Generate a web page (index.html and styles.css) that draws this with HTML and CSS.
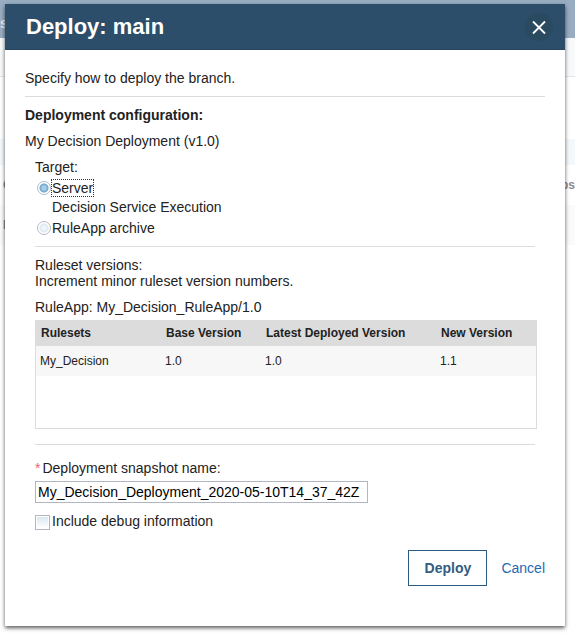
FILE: index.html
```
<!DOCTYPE html>
<html lang="en">
<head>
<meta charset="utf-8">
<title>Deploy: main</title>
<link rel="stylesheet" href="styles.css">
</head>
<body>
<div class="page" aria-hidden="true">
  <div class="page-bar">s</div>
  <div class="page-tabs"></div>
  <div class="page-gap"></div>
  <div class="page-tools"></div>
  <div class="page-row page-head"><span>C</span><span>ps</span></div>
  <div class="page-row page-item"><span>I</span></div>
</div>
<form class="dialog" role="dialog" aria-labelledby="title">
  <header class="dialog-head">
    <h1 id="title">Deploy: main</h1>
    <button class="close" type="button" aria-label="Close">
      <svg width="28" height="28" viewBox="0 0 28 28"><path d="M8 8.5l12 12M20 8.5l-12 12" fill="none" stroke="#fff" stroke-width="1.8"/></svg>
    </button>
  </header>
  <div class="dialog-body">
    <p class="intro">Specify how to deploy the branch.</p>
    <h2>Deployment configuration:</h2>
    <p class="config">My Decision Deployment (v1.0)</p>
    <div class="details">
      <div class="section targets" role="radiogroup" aria-labelledby="target">
        <p id="target">Target:</p>
        <div class="option"><input class="radio" type="radio" name="target" id="server" checked><label class="focused" for="server">Server</label></div>
        <p class="service">Decision Service Execution</p>
        <div class="option"><input class="radio" type="radio" name="target" id="archive"><label for="archive">RuleApp archive</label></div>
      </div>
      <div class="section rulesets">
        <p>Ruleset versions:</p>
        <p>Increment minor ruleset version numbers.</p>
        <p class="ruleapp">RuleApp: My_Decision_RuleApp/1.0</p>
        <div class="grid">
          <table>
            <colgroup><col class="c-name"><col class="c-base"><col class="c-latest"><col></colgroup>
            <thead><tr><th scope="col">Rulesets</th><th scope="col">Base Version</th><th scope="col">Latest Deployed Version</th><th scope="col">New Version</th></tr></thead>
            <tbody><tr><td>My_Decision</td><td>1.0</td><td>1.0</td><td>1.1</td></tr></tbody>
          </table>
        </div>
      </div>
      <div class="snapshot">
        <label class="field-label" for="snapshot"><span class="required">*</span>Deployment snapshot name:</label>
        <input class="text" type="text" id="snapshot" value="My_Decision_Deployment_2020-05-10T14_37_42Z">
        <div class="debug"><input class="check" type="checkbox" id="debug"><label for="debug">Include debug information</label></div>
      </div>
    </div>
    <footer class="actions">
      <button class="deploy" type="submit">Deploy</button>
      <a class="cancel" href="#">Cancel</a>
    </footer>
  </div>
</form>
</body>
</html>
```
FILE: styles.css
```
* { box-sizing: border-box; }

body {
  margin: 0;
  background: #fff;
  color: #222;
  font: 14px/16px "Liberation Sans", Arial, sans-serif;
}

h1, h2, p { margin: 0; font-size: 14px; }

/* Page behind the dialog */
.page-bar {
  height: 38px;
  padding-top: 15px;
  background: #99adc2;
  color: #e6ecf2;
  font-weight: bold;
}
.page-tabs { height: 39px; background: #f7f9fb; border-bottom: 1px solid #e2e8ea; }
.page-gap { height: 62px; }
.page-tools { height: 26px; background: #f3f8fb; }
.page-row {
  display: flex;
  justify-content: space-between;
  align-items: center;
  height: 40px;
  padding-left: 3px;
  color: #8d8b90;
  font-size: 12px;
  font-weight: bold;
}
.page-item { background: #fafafa; }

/* Dialog */
.dialog {
  position: absolute;
  top: 4px;
  left: 5px;
  right: 10px;
  background: #fff;
  box-shadow: 0 2px 4px rgba(0, 0, 0, 0.65);
}
.dialog-head {
  display: flex;
  align-items: center;
  justify-content: space-between;
  height: 46px;
  padding: 0 12px 0 21px;
  background: #2d4e6b;
  border-bottom: 1px solid #274562;
}
.dialog-head h1 { color: #fff; font-size: 22px; line-height: 26px; }
.close {
  width: 28px;
  height: 28px;
  padding: 0;
  border: 0;
  border-radius: 50%;
  background: #294a5f;
}
.close svg { display: block; }

.dialog-body { padding: 20px 20px 40px; }
.intro { padding-bottom: 10px; margin-bottom: 10px; border-bottom: 1px solid #dcdcdc; }
.config { margin: 10px 0; }
.details { padding: 0 10px; }
.section { border-bottom: 1px solid #dcdcdc; }

.targets { padding-bottom: 10px; margin-bottom: 10px; }
.option { display: flex; align-items: center; gap: 1px; padding-left: 2px; margin-top: 5px; }
.option label { margin: -1px; border: 1px solid transparent; }
.option .focused { border: 1px dotted #333; }
.service { margin-top: 3px; padding-left: 17px; }
.radio {
  appearance: none;
  width: 14px;
  height: 14px;
  margin: 0;
  border: 1px solid #b4bac7;
  border-radius: 50%;
  background: radial-gradient(circle, #edf4fa 0 2px, #dce8f2 4px, #fff 5px);
}
.radio:checked { background: radial-gradient(circle, #a5cce8 0 2px, #6ea3c9 4px, #fff 5px); }

.rulesets { padding-bottom: 15px; margin-bottom: 15px; }
.ruleapp { margin: 10px 0 5px; }
.grid { margin-right: -2px; min-height: 109px; border: 1px solid #dcdcdc; border-top: 0; }
table { width: 100%; border-collapse: collapse; table-layout: fixed; font-size: 12px; text-align: left; }
.c-name { width: 125px; }
.c-base { width: 100px; }
.c-latest { width: 175px; }
th { height: 26px; padding: 0 5px; background: #dcdcdc; }
td { height: 30px; padding: 0 4px; background: #f7f7f7; }

.field-label { display: block; }
.required { margin-right: 2px; color: #e66; }
.text {
  display: block;
  width: 333px;
  max-width: 100%;
  height: 22px;
  margin: 5px 0 10px;
  padding: 0 2px;
  border: 1px solid #b1b6c2;
  border-radius: 0;
  background: #fff;
  color: #000;
  font: inherit;
}
.debug { display: flex; align-items: flex-start; gap: 2px; }
.check {
  appearance: none;
  width: 15px;
  height: 15px;
  margin: 2px 0 0;
  padding: 1px;
  border: 1px solid #b1b6c2;
  background: linear-gradient(#d9e7f1, #fff) content-box;
}

.actions { display: flex; justify-content: flex-end; align-items: center; gap: 14px; margin-top: 20px; }
.deploy {
  min-width: 79px;
  height: 36px;
  padding: 0 15px;
  border: 1px solid #2b5a84;
  background: #fff;
  color: #325c80;
  font: bold 14px/16px "Liberation Sans", Arial, sans-serif;
}
.cancel { color: #1f68b5; text-decoration: none; }
```
